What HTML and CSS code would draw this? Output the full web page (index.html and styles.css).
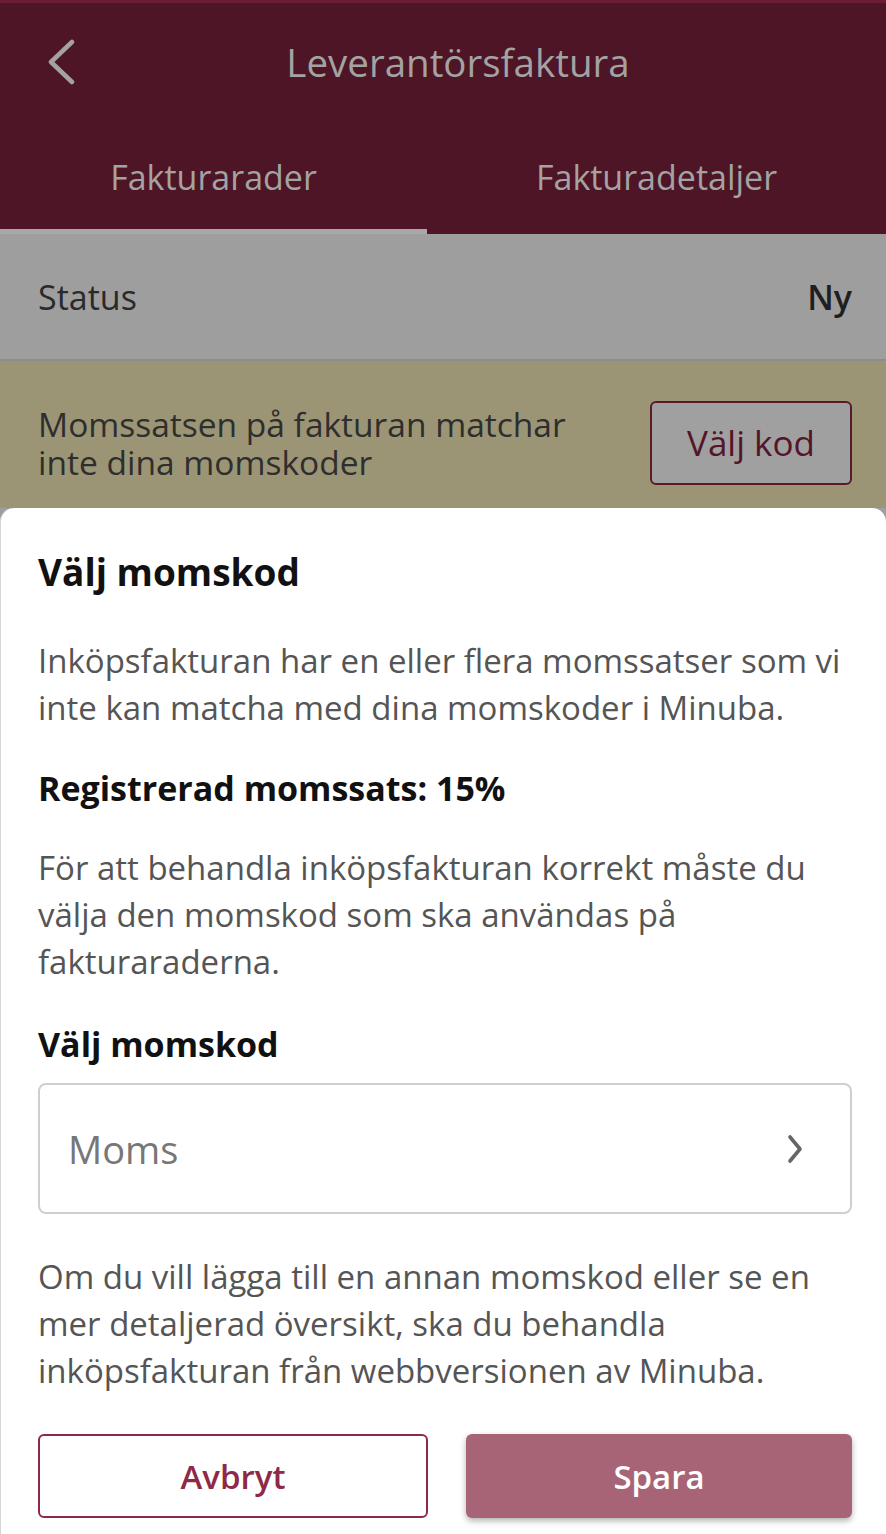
FILE: index.html
```html
<!DOCTYPE html>
<html lang="sv">
<head>
<meta charset="utf-8">
<title>Leverantörsfaktura</title>
<link rel="stylesheet" href="styles.css">
</head>
<body>
<div class="screen">
  <header class="appbar">
    <div class="topbar">
      <span class="back">
        <svg width="34" height="46" viewBox="0 0 34 46"><path d="M28 3 L7 23 L28 43" fill="none" stroke="#a3a3a3" stroke-width="4.5" stroke-linecap="round" stroke-linejoin="round"/></svg>
      </span>
      <h1 class="title">Leverantörsfaktura</h1>
    </div>
    <nav class="tabs">
      <div class="tab active">Fakturarader</div>
      <div class="tab">Fakturadetaljer</div>
    </nav>
  </header>
  <div class="status">
    <span>Status</span>
    <span class="status-val">Ny</span>
  </div>
  <div class="banner">
    <p class="banner-text">Momssatsen på fakturan matchar inte dina momskoder</p>
    <button class="banner-btn">Välj kod</button>
  </div>
  <section class="sheet">
    <h2 class="sheet-title">Välj momskod</h2>
    <p class="para first">Inköpsfakturan har en eller flera momssatser som vi inte kan matcha med dina momskoder i Minuba.</p>
    <p class="strong">Registrerad momssats: 15%</p>
    <p class="para second">För att behandla inköpsfakturan korrekt måste du välja den momskod som ska användas på fakturaraderna.</p>
    <p class="strong label">Välj momskod</p>
    <div class="select">
      <span class="placeholder">Moms</span>
      <svg width="22" height="30" viewBox="0 0 22 30"><path d="M6 3 L16 15 L6 27" fill="none" stroke="#666" stroke-width="3.6" stroke-linecap="round" stroke-linejoin="round"/></svg>
    </div>
    <p class="para note">Om du vill lägga till en annan momskod eller se en mer detaljerad översikt, ska du behandla inköpsfakturan från webbversionen av Minuba.</p>
    <div class="actions">
      <button class="btn outline">Avbryt</button>
      <button class="btn filled">Spara</button>
    </div>
  </section>
</div>
</body>
</html>
```
FILE: styles.css
```css
* { box-sizing: border-box; }
html, body { margin: 0; padding: 0; }
body {
  font-family: "Open Sans", "Noto Sans", sans-serif;
  background: #fff;
  width: 886px;
  height: 1534px;
  overflow: hidden;
}
.screen {
  display: flex;
  flex-direction: column;
  height: 1534px;
  background: #9e9e9e;
}
.appbar {
  background: #4e1526;
  border-top: 3px solid #6c1d35;
}
.topbar {
  position: relative;
  height: 117px;
  display: flex;
  align-items: center;
  justify-content: center;
  padding-left: 30px;
}
.back {
  position: absolute;
  left: 44px;
  top: 36px;
  display: flex;
}
.title {
  margin: 0;
  font-size: 38.5px;
  font-weight: 400;
  color: #a3a3a3;
}
.tabs {
  display: flex;
  height: 114px;
}
.tab {
  display: flex;
  align-items: center;
  justify-content: center;
  font-size: 34px;
  font-weight: 500;
  color: #a3a3a3;
  padding-top: 4px;
  border-bottom: 5px solid transparent;
}
.tab.active {
  flex: 0 0 427px;
  border-bottom-color: #a8a8a8;
}
.tab:not(.active) { flex: 1; }
.status {
  height: 127px;
  display: flex;
  justify-content: space-between;
  align-items: center;
  padding: 0 34px 0 38px;
  font-size: 34px;
  color: #2a2a2a;
  border-bottom: 2px solid #8c8c8c;
  background: #9e9e9e;
}
.status-val { font-weight: 600; color: #1f1f1f; }
.banner {
  background: #9b9575;
  height: 147px;
  display: flex;
  align-items: center;
  justify-content: space-between;
  padding: 16px 34px 0 38px;
}
.banner-text {
  margin: 0;
  width: 570px;
  font-size: 33.5px;
  line-height: 38px;
  color: #2e2e2e;
}
.banner-btn {
  font-family: inherit;
  width: 202px;
  height: 84px;
  border: 2px solid #5a1a2c;
  border-radius: 6px;
  background: #a0a0a0;
  color: #55142a;
  font-size: 35px;
  font-weight: 500;
}
.sheet {
  flex: 1;
  background: #fff;
  border-radius: 14px 14px 0 0;
  border-left: 1px solid #d6d6d6;
  padding: 40px 34px 0 37px;
}
.sheet-title {
  margin: 0;
  font-size: 37px;
  font-weight: 700;
  color: #111;
  line-height: 48px;
}
.para {
  margin: 0;
  font-size: 33px;
  line-height: 47px;
  color: #555;
}
.para.first { margin-top: 41px; }
.para.second { margin-top: 32px; }
.strong {
  margin: 33px 0 0;
  font-size: 34px;
  font-weight: 700;
  color: #111;
  line-height: 48px;
}
.label { margin-top: 35px; }
.select {
  margin-top: 15px;
  height: 131px;
  border: 2px solid #cfcfcf;
  border-radius: 8px;
  display: flex;
  align-items: center;
  justify-content: space-between;
  padding: 0 44px 0 28px;
}
.placeholder {
  font-size: 38px;
  color: #777;
}
.para.note { margin-top: 39px; }
.actions {
  display: flex;
  gap: 38px;
  margin-top: 40px;
}
.btn {
  flex: 1;
  height: 84px;
  border-radius: 6px;
  font-family: inherit;
  font-size: 33px;
  font-weight: 600;
}
.btn.outline {
  background: #fff;
  border: 2px solid #8e2a48;
  color: #8e2a48;
}
.btn.filled {
  background: #a86477;
  border: none;
  color: #fff;
  box-shadow: 0 3px 6px rgba(0,0,0,0.3);
}
```
